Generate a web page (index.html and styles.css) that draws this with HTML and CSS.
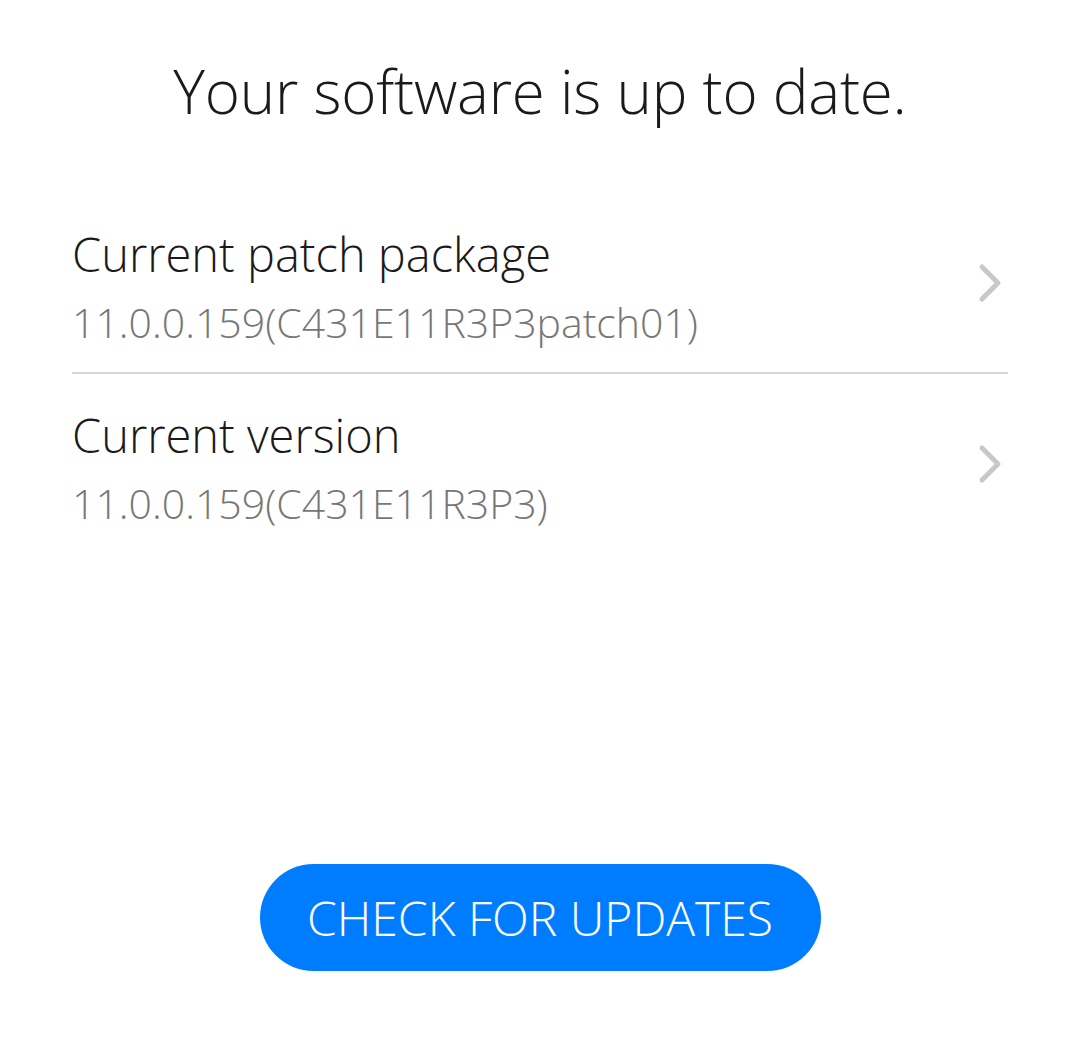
FILE: index.html
```html
<!DOCTYPE html>
<html>
<head>
<meta charset="utf-8">
<link rel="stylesheet" href="styles.css">
</head>
<body>
<div class="page">
  <h1 class="status">Your software is up to date.</h1>
  <div class="list">
    <div class="row">
      <div class="texts">
        <div class="label">Current patch package</div>
        <div class="value">11.0.0.159(C431E11R3P3patch01)</div>
      </div>
      <svg class="chev" viewBox="0 0 26 40" width="26" height="40"><path d="M5 4 L21 20 L5 36" fill="none" stroke="#c8c8c8" stroke-width="5" stroke-linecap="round" stroke-linejoin="round"/></svg>
    </div>
    <div class="divider"></div>
    <div class="row">
      <div class="texts">
        <div class="label">Current version</div>
        <div class="value">11.0.0.159(C431E11R3P3)</div>
      </div>
      <svg class="chev" viewBox="0 0 26 40" width="26" height="40"><path d="M5 4 L21 20 L5 36" fill="none" stroke="#c8c8c8" stroke-width="5" stroke-linecap="round" stroke-linejoin="round"/></svg>
    </div>
  </div>
  <div class="spacer"></div>
  <div class="actions">
    <button class="btn">CHECK FOR UPDATES</button>
  </div>
</div>
</body>
</html>
```
FILE: styles.css
```css
html, body {
  margin: 0;
  padding: 0;
  background: #ffffff;
}
body {
  font-family: "Open Sans", "Noto Sans", sans-serif;
  font-weight: 300;
  color: #1a1a1a;
}
.page {
  width: 1080px;
  height: 1043px;
  display: flex;
  flex-direction: column;
  box-sizing: border-box;
  padding: 0 72px;
}
.status {
  margin: 47px 0 0;
  font-size: 60px;
  font-weight: 300;
  line-height: 88px;
  letter-spacing: -0.2px;
  text-align: center;
  color: #1a1a1a;
}
.list {
  margin-top: 87px;
}
.row {
  display: flex;
  align-items: center;
  justify-content: space-between;
  padding-right: 5px;
}
.chev {
  margin-bottom: 11px;
}
.texts {
  display: flex;
  flex-direction: column;
}
.label {
  font-size: 47px;
  line-height: 64px;
  color: #1a1a1a;
}
.value {
  margin-top: 3px;
  font-size: 41px;
  line-height: 66px;
  color: #777777;
}
.divider {
  height: 2px;
  background: #d6d6d6;
  margin: 17px 0 29px;
}
.spacer {
  flex: 1;
}
.actions {
  display: flex;
  justify-content: center;
  padding-bottom: 72px;
}
.btn {
  width: 561px;
  height: 107px;
  border: none;
  border-radius: 54px;
  background: #007dff;
  color: #ffffff;
  font-family: "Open Sans", "Noto Sans", sans-serif;
  font-weight: 300;
  font-size: 48px;
  padding: 0;
}
```
